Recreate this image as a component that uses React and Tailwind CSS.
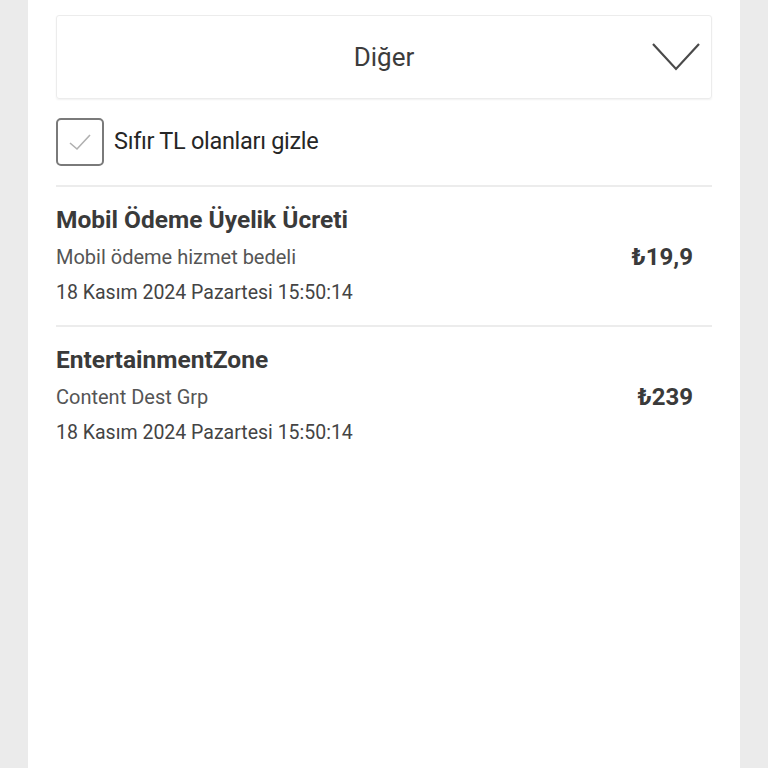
import React from "react";

const items = [
  {
    title: "Mobil Ödeme Üyelik Ücreti",
    desc: "Mobil ödeme hizmet bedeli",
    date: "18 Kasım 2024 Pazartesi 15:50:14",
    price: "₺19,9",
  },
  {
    title: "EntertainmentZone",
    desc: "Content Dest Grp",
    date: "18 Kasım 2024 Pazartesi 15:50:14",
    price: "₺239",
  },
];

export default function App() {
  return (
    <div className="min-h-[768px] bg-[#ebebeb] px-[28px]" style={{ fontFamily: "Roboto, 'Noto Sans', sans-serif" }}>
      <div className="min-h-[768px] bg-white px-[28px] pt-[15px]">
        <div className="flex h-[84px] items-center rounded-[3px] border border-[#ececec] shadow-[0_1px_2px_rgba(0,0,0,0.06)]">
          <div className="w-[60px]" />
          <span className="flex-1 text-center text-[26px] text-[#3c3c3c]">Diğer</span>
          <div className="flex w-[60px] justify-start">
            <svg width="50" height="30" viewBox="0 0 50 30" fill="none">
              <path d="M2 2 L25 27 L48 2" stroke="#4a4a4a" strokeWidth="2.2" strokeLinejoin="miter" />
            </svg>
          </div>
        </div>

        <label className="mt-[19px] flex items-center gap-[10px]">
          <span className="flex h-[48px] w-[48px] items-center justify-center rounded-[5px] border-2 border-[#7a7a7a]">
            <svg width="24" height="20" viewBox="0 0 24 20" fill="none">
              <path d="M2 11 L9 17 L22 3" stroke="#b0b0b0" strokeWidth="1.6" />
            </svg>
          </span>
          <span className="text-[23.5px] tracking-[-0.3px] text-[#262626]">Sıfır TL olanları gizle</span>
        </label>

        <div className="mt-[19px] h-[2px] bg-[#ececec]" />

        {items.map((it, i) => (
          <div key={it.title}>
            <div className="flex items-center justify-between pb-[14px] pt-[16px] pr-[19px]">
              <div className="flex flex-col">
                <span className="text-[24.5px] font-bold leading-[34px] text-[#3a3a3a]">{it.title}</span>
                <span className="mt-[2px] text-[20px] leading-[36px] text-[#555]">{it.desc}</span>
                <span className="text-[19.5px] leading-[36px] text-[#444]">{it.date}</span>
              </div>
              <span className="text-[24px] font-bold text-[#3a3a3a]">{it.price}</span>
            </div>
            {i === 0 && <div className="h-[2px] bg-[#ececec]" />}
          </div>
        ))}
      </div>
    </div>
  );
}
